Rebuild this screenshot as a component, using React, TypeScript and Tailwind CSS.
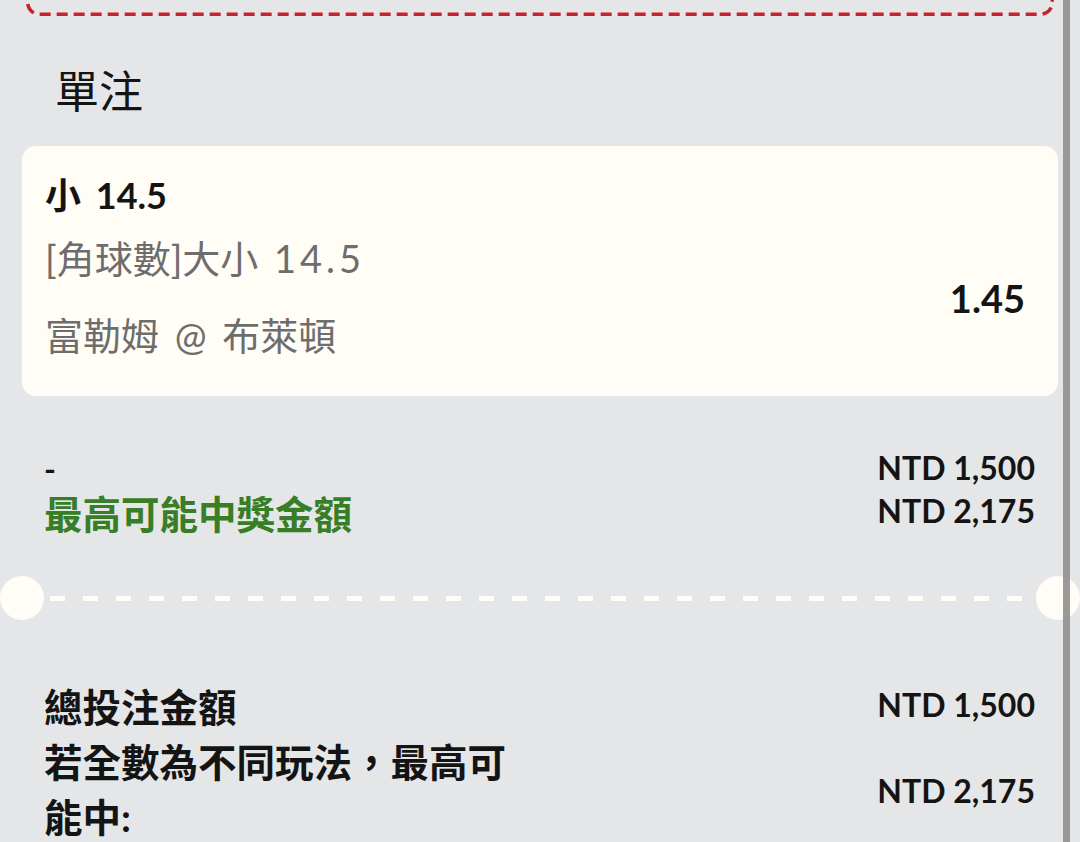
export default function App() {
  return (
    <div className="relative h-[842px] w-[1080px] overflow-hidden bg-[#e5e6e8] font-[family-name:'Lato','Noto_Sans_CJK_TC',sans-serif] text-[#141414]">
      {/* tail of the previous (red dashed) box */}
      <div className="relative mx-[26px] h-[16px]">
        <svg className="absolute inset-0 overflow-visible" width="1028" height="16" viewBox="0 0 1028 16" fill="none">
          <path
            d="M1.75 -30 V2.5 A11.75 11.75 0 0 0 13.5 14.25 H1014.5 A11.75 11.75 0 0 0 1026.25 2.5 V-30"
            stroke="#c8232c"
            strokeWidth="3.5"
            strokeDasharray="11 6"
          />
        </svg>
      </div>

      <h2 className="mt-[47px] pl-[55px] text-[44px] font-normal leading-[56px]">單注</h2>

      {/* bet card */}
      <div className="mx-[22px] mt-[27px] flex justify-between rounded-[14px] bg-[#fffdf5] pb-[33px] pl-[23px] pr-[33px] pt-[27px]">
        <div className="[word-spacing:6px]">
          <div className="text-[36px] font-bold leading-[44px]">小 14.5</div>
          <div className="mt-[13px] text-[38px] leading-[56px] text-[#6d6d6d]">
            [角球數]大小 <span className="tracking-[4px]">14.5</span>
          </div>
          <div className="mt-[21px] text-[38px] leading-[56px] text-[#6d6d6d]">富勒姆 @ 布萊頓</div>
        </div>
        <div className="mt-[102px] text-[38px] font-bold leading-[46px]">1.45</div>
      </div>

      {/* stake / potential win */}
      <div className="mt-[50px] flex items-start justify-between pl-[44px] pr-[45px]">
        <div className="pt-[1px]">
          <div className="text-[32px] font-bold leading-[43px]">-</div>
          <div className="text-[38.5px] font-bold leading-[49px] text-[#387e26]">最高可能中獎金額</div>
        </div>
        <div className="text-right text-[32px] font-bold leading-[43px]">
          <div>NTD 1,500</div>
          <div>NTD 2,175</div>
        </div>
      </div>

      {/* ticket separator */}
      <div className="mt-[37px] flex h-[44px] items-center">
        <div className="h-[44px] w-[44px] shrink-0 rounded-full bg-[#fffdf5]" />
        <div className="mx-[6px] h-[5px] flex-1 bg-[image:repeating-linear-gradient(to_right,#fffdf5_0px,#fffdf5_15px,transparent_15px,transparent_33px)]" />
        <div className="h-[44px] w-[44px] shrink-0 rounded-full bg-[#fffdf5]" />
      </div>

      {/* totals */}
      <div className="mt-[60px] pl-[44px] pr-[45px]">
        <div className="flex items-start justify-between">
          <div className="text-[38.5px] font-bold leading-[55px]">總投注金額</div>
          <div className="text-[32px] font-bold leading-[49px]">NTD 1,500</div>
        </div>
        <div className="flex items-center justify-between">
          <div className="w-[480px] text-[38.5px] font-bold leading-[55px]">若全數為不同玩法，最高可能中:</div>
          <div className="text-[32px] font-bold leading-[49px]">NTD 2,175</div>
        </div>
      </div>

      {/* scrollbar overlay */}
      <div className="absolute right-[10px] top-0 h-full w-[7px] bg-[#8f8f8f]/90" />
    </div>
  );
}
